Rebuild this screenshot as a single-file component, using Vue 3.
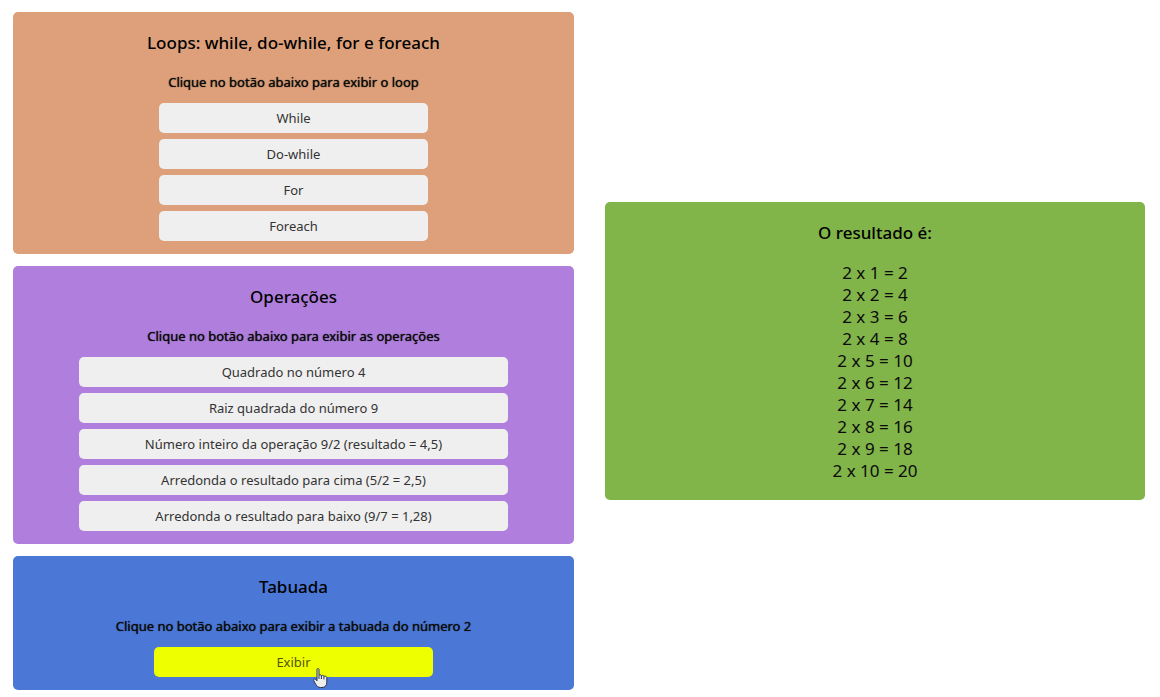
<script setup>
import { ref, computed } from 'vue'

const cards = [
  {
    id: 'loops',
    title: 'Loops: while, do-while, for e foreach',
    hint: 'Clique no botão abaixo para exibir o loop',
    buttons: ['While', 'Do-while', 'For', 'Foreach'],
  },
  {
    id: 'operacoes',
    title: 'Operações',
    hint: 'Clique no botão abaixo para exibir as operações',
    buttons: [
      'Quadrado no número 4',
      'Raiz quadrada do número 9',
      'Número inteiro da operação 9/2 (resultado = 4,5)',
      'Arredonda o resultado para cima (5/2 = 2,5)',
      'Arredonda o resultado para baixo (9/7 = 1,28)',
    ],
  },
  {
    id: 'tabuada',
    title: 'Tabuada',
    hint: 'Clique no botão abaixo para exibir a tabuada do número 2',
    buttons: ['Exibir'],
  },
]

const active = ref('Exibir')
const base = ref(2)
const lines = computed(() =>
  Array.from({ length: 10 }, (_, i) => `${base.value} x ${i + 1} = ${base.value * (i + 1)}`)
)
</script>

<template>
  <main class="page">
    <div class="column">
      <section v-for="card in cards" :key="card.id" class="card" :class="card.id">
        <h2>{{ card.title }}</h2>
        <h3>{{ card.hint }}</h3>
        <div class="buttons">
          <button
            v-for="label in card.buttons"
            :key="label"
            type="button"
            :class="{ active: active === label }"
            @click="active = label"
          >
            {{ label }}
            <svg v-if="active === label" class="pointer" viewBox="0 0 16 21" aria-hidden="true">
              <path
                d="M4 1.5C4 .2 6 .2 6 1.5V7.4C6.5 6.4 8.2 6.6 8.4 7.8C9 6.9 10.6 7.2 10.9 8.4C11.7 7.7 13.8 8.2 13.8 9.6V14.5C13.8 17 12.4 19.5 9 19.5H7.5C5 19.5 3.8 18 2.4 15.8L.7 12.4C.2 11.3 1.6 10.4 2.6 11.3L4 12.8Z"
                fill="#ededed"
                stroke="#26334d"
                stroke-width="1"
                stroke-linejoin="round"
              />
              <path d="M6 7.4V11M8.4 7.8V11M10.9 8.4V11.4" fill="none" stroke="#26334d" stroke-width="1" />
            </svg>
          </button>
        </div>
      </section>
    </div>

    <section class="card result">
      <h2>O resultado é:</h2>
      <ul>
        <li v-for="line in lines" :key="line">{{ line }}</li>
      </ul>
    </section>
  </main>
</template>

<style>
body {
  background: #fff;
}
</style>

<style scoped>
.page {
  display: grid;
  grid-template-columns: 561fr 540fr;
  column-gap: 31px;
  align-items: center;
  padding: 12px 15px 0 13px;
  font-family: "Noto Sans", "Open Sans", sans-serif;
  color: #0b0b0b;
}

.column {
  display: flex;
  flex-direction: column;
  gap: 12px;
}

.card {
  padding: 19px 12px 13px;
  border-radius: 5px;
  text-align: center;
}

.loops {
  background: #dea07b;
}

.operacoes {
  background: #b07fde;
}

.tabuada {
  background: #4b78d7;
}

.result {
  padding-bottom: 18px;
  background: #81b449;
}

h2 {
  margin: 0;
  font-size: 17px;
  line-height: 24px;
  font-weight: 500;
  color: #000;
}

h3 {
  margin: 17px 0 11px;
  font-size: 13px;
  line-height: 20px;
  font-weight: 400;
  text-shadow: 0 0 1px currentColor;
}

.buttons {
  display: flex;
  flex-direction: column;
  gap: 6px;
  width: 50%;
  margin: 0 auto;
}

.operacoes .buttons {
  width: 80%;
}

.tabuada .buttons {
  width: 52%;
}

button {
  position: relative;
  height: 30px;
  padding: 0;
  border: 0;
  border-radius: 5px;
  background: #efefef;
  color: #333;
  font-family: inherit;
  font-size: 13px;
  line-height: 20px;
  cursor: pointer;
}

button.active {
  background: #eeff00;
  color: #55550a;
}

.pointer {
  position: absolute;
  left: 57%;
  top: 21px;
  width: 16px;
  height: 21px;
}

ul {
  margin: 17px 0 0;
  padding: 0;
  list-style: none;
  font-size: 17px;
  line-height: 22px;
}
</style>
